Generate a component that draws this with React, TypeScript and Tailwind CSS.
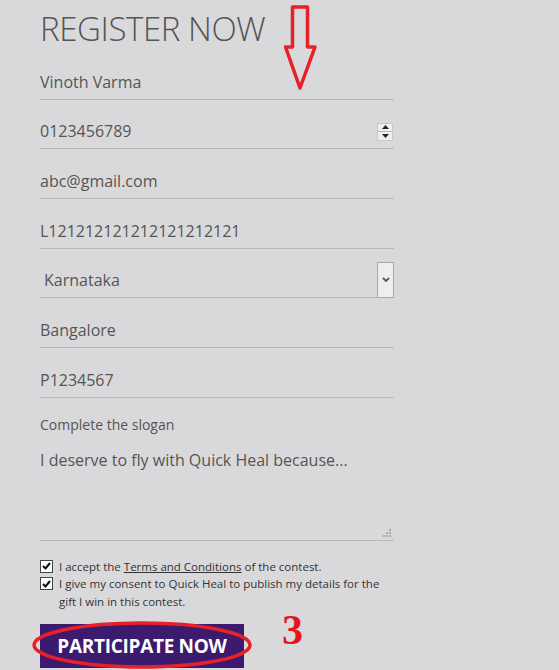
import React from "react";

const font = { fontFamily: '"Open Sans", "Noto Sans", sans-serif' };

function Row({ children, className = "" }: { children: React.ReactNode; className?: string }) {
  return (
    <div className={`relative flex h-[49.7px] items-end border-b border-[#b9b9bb] pb-[5px] ${className}`}>
      {children}
    </div>
  );
}

function Check() {
  return (
    <span className="mt-[2px] flex h-[13px] w-[13px] shrink-0 items-center justify-center border border-[#444] bg-white">
      <svg width="9" height="8" viewBox="0 0 9 8">
        <path d="M1 4 L3.5 6.5 L8 1" stroke="#111" strokeWidth="2" fill="none" />
      </svg>
    </span>
  );
}

export default function App() {
  return (
    <div className="relative min-h-[670px] w-[559px] overflow-hidden bg-[#d9d9db] text-[#555]" style={font}>
      <div className="w-[394px] pl-[40px]">
        <h1 className="h-[50px] pt-[10px] text-[33px] font-light leading-[38px] tracking-[-0.4px] text-[#555]">
          REGISTER NOW
        </h1>
        <Row>
          <span className="text-[16px] leading-[24px]">Vinoth Varma</span>
        </Row>
        <Row>
          <span className="text-[16px] leading-[24px]">0123456789</span>
          <span className="absolute right-[1px] top-[23px] flex h-[18px] w-[16px] flex-col border border-[#c8c8c8] bg-[#eeeeee]">
            <span className="flex flex-1 items-center justify-center border-b border-[#bbb]">
              <svg width="7" height="4" viewBox="0 0 7 4"><path d="M0 4 L3.5 0 L7 4Z" fill="#222" /></svg>
            </span>
            <span className="flex flex-1 items-center justify-center">
              <svg width="7" height="4" viewBox="0 0 7 4"><path d="M0 0 L3.5 4 L7 0Z" fill="#222" /></svg>
            </span>
          </span>
        </Row>
        <Row>
          <span className="text-[16px] leading-[24px]">abc@gmail.com</span>
        </Row>
        <Row>
          <span className="text-[16px] leading-[24px]">L121212121212121212121</span>
        </Row>
        <Row className="pb-[4px]">
          <span className="pl-[4px] text-[16px] leading-[24px]">Karnataka</span>
          <span className="absolute bottom-[-1px] right-0 flex h-[36px] w-[17px] items-center justify-center border border-[#a8a8a8] bg-[#eeeeee]">
            <svg width="8" height="6" viewBox="0 0 8 6"><path d="M1 1 L4 4 L7 1" stroke="#555" strokeWidth="1.8" fill="none" /></svg>
          </span>
        </Row>
        <Row>
          <span className="text-[16px] leading-[24px]">Bangalore</span>
        </Row>
        <Row>
          <span className="text-[16px] leading-[24px]">P1234567</span>
        </Row>
        <div className="pt-[17px] text-[14px] leading-[20px]">Complete the slogan</div>
        <div className="relative h-[106px] border-b border-[#b9b9bb] pt-[13px] text-[16px] leading-[24px]">
          I deserve to fly with Quick Heal because...
          <svg className="absolute bottom-[3px] right-[3px]" width="8" height="8" viewBox="0 0 8 8">
            <rect x="6" y="0" width="2" height="2" fill="#aaa" />
            <rect x="3" y="3" width="2" height="2" fill="#aaa" />
            <rect x="6" y="3" width="2" height="2" fill="#aaa" />
            <rect x="0" y="6" width="2" height="2" fill="#aaa" />
            <rect x="3" y="6" width="2" height="2" fill="#aaa" />
            <rect x="6" y="6" width="2" height="2" fill="#aaa" />
          </svg>
        </div>
        <div className="pt-[17px] text-[11.5px] leading-[17.5px] text-[#333]">
          <div className="flex gap-[6px]">
            <Check />
            <span>
              I accept the <span className="underline">Terms and Conditions</span> of the contest.
            </span>
          </div>
          <div className="flex gap-[6px]">
            <Check />
            <span>I give my consent to Quick Heal to publish my details for the gift I win in this contest.</span>
          </div>
        </div>
        <div className="pt-[14px]">
          <button className="flex h-[44px] w-[204px] items-center justify-center bg-[#3c1a6e] text-[19px] font-bold tracking-[-0.3px] text-white">
            PARTICIPATE NOW
          </button>
        </div>
      </div>

      {/* annotation: arrow */}
      <svg className="absolute left-[282px] top-[4px]" width="38" height="88" viewBox="0 0 38 88">
        <path d="M10.5 3 L25.5 3 L25.5 43 L33 43 L18 84 L3.5 43 L10.5 43 Z" fill="none" stroke="#e8202a" strokeWidth="3.5" strokeLinejoin="round" />
      </svg>
      {/* annotation: ellipse */}
      <svg className="absolute left-[31px] top-[620px]" width="224" height="50" viewBox="0 0 224 50">
        <ellipse cx="111" cy="25" rx="108" ry="22" fill="none" stroke="#e8202a" strokeWidth="3.5" />
      </svg>
      {/* annotation: number */}
      <span
        className="absolute left-[282px] top-[609px] text-[42px] font-bold leading-[42px] text-[#e2151e]"
        style={{ fontFamily: '"Liberation Serif", serif' }}
      >
        3
      </span>
    </div>
  );
}
